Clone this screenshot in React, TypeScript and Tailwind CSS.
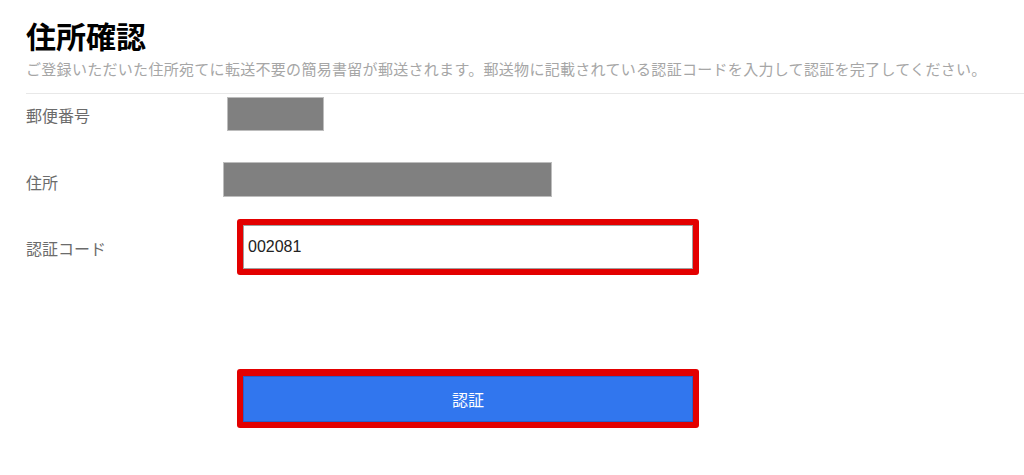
export default function App() {
  return (
    <div className="min-h-[475px] bg-white pl-[26px] font-['Noto_Sans_CJK_JP','Noto_Sans',sans-serif]">
      <h1 className="pt-[15px] text-[30px] font-bold leading-[40px] text-black">住所確認</h1>
      <p className="mt-[2px] text-[15px] leading-[24px] tracking-[0.3px] whitespace-nowrap text-[#a6a6a6]">
        ご登録いただいた住所宛てに転送不要の簡易書留が郵送されます。郵送物に記載されている認証コードを入力して認証を完了してください。
      </p>
      <div className="mt-[12px] h-px bg-[#e8e8e8]" />

      <div className="flex items-start pt-[3px]">
        <div className="w-[197px] pt-[6px] text-[16px] leading-[24px] text-[#6b6b6b]">郵便番号</div>
        <div className="ml-[4px] h-[34px] w-[97px] border border-[#bdbdbd] bg-[#808080]" />
      </div>

      <div className="mt-[31px] flex items-start">
        <div className="w-[197px] pt-[8px] text-[16px] leading-[24px] text-[#6b6b6b]">住所</div>
        <div className="h-[35px] w-[329px] border border-[#bdbdbd] bg-[#808080]" />
      </div>

      <div className="mt-[22px] flex items-start">
        <div className="w-[197px] pt-[17px] text-[16px] leading-[24px] text-[#6b6b6b]">認証コード</div>
        <div className="ml-[14px] w-[462px] rounded-[3px] bg-[#e30000] p-[6px]">
          <input
            readOnly
            value="002081"
            className="block h-[44px] w-full border border-[#a0a0a0] bg-white px-[4px] font-['Liberation_Sans',Arial,sans-serif] text-[16px] text-[#222] outline-none"
          />
        </div>
      </div>

      <div className="mt-[94px] ml-[211px] w-[462px] rounded-[3px] bg-[#e30000] px-[6px] pt-[7px] pb-[6px]">
        <button className="flex h-[46px] w-full items-center justify-center border border-[#2a5fc8] bg-[#3176ee] text-[16px] text-white">
          認証
        </button>
      </div>
    </div>
  );
}
